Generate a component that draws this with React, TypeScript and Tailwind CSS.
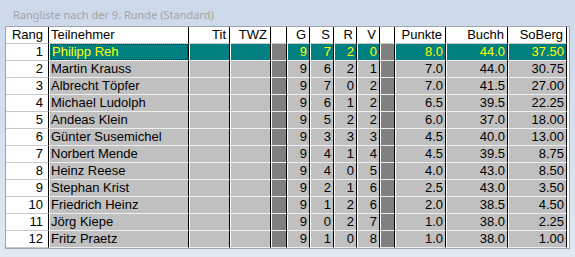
import React from "react";

type Col = { w: number; label: string; align: "left" | "right"; dark?: boolean; fixed?: boolean };

const cols: Col[] = [
  { w: 43, label: "Rang", align: "right", fixed: true },
  { w: 140, label: "Teilnehmer", align: "left" },
  { w: 41, label: "Tit", align: "right" },
  { w: 41, label: "TWZ", align: "right" },
  { w: 16, label: "", align: "right", dark: true },
  { w: 23, label: "G", align: "right" },
  { w: 24, label: "S", align: "right" },
  { w: 23, label: "R", align: "right" },
  { w: 23, label: "V", align: "right" },
  { w: 15, label: "", align: "right", dark: true },
  { w: 51, label: "Punkte", align: "right" },
  { w: 62, label: "Buchh", align: "right" },
  { w: 59, label: "SoBerg", align: "right" },
];

const rows: string[][] = [
  ["1", "Philipp Reh", "", "", "", "9", "7", "2", "0", "", "8.0", "44.0", "37.50"],
  ["2", "Martin Krauss", "", "", "", "9", "6", "2", "1", "", "7.0", "44.0", "30.75"],
  ["3", "Albrecht Töpfer", "", "", "", "9", "7", "0", "2", "", "7.0", "41.5", "27.00"],
  ["4", "Michael Ludolph", "", "", "", "9", "6", "1", "2", "", "6.5", "39.5", "22.25"],
  ["5", "Andeas Klein", "", "", "", "9", "5", "2", "2", "", "6.0", "37.0", "18.00"],
  ["6", "Günter Susemichel", "", "", "", "9", "3", "3", "3", "", "4.5", "40.0", "13.00"],
  ["7", "Norbert Mende", "", "", "", "9", "4", "1", "4", "", "4.5", "39.5", "8.75"],
  ["8", "Heinz Reese", "", "", "", "9", "4", "0", "5", "", "4.0", "43.0", "8.50"],
  ["9", "Stephan Krist", "", "", "", "9", "2", "1", "6", "", "2.5", "43.0", "3.50"],
  ["10", "Friedrich Heinz", "", "", "", "9", "1", "2", "6", "", "2.0", "38.5", "4.50"],
  ["11", "Jörg Kiepe", "", "", "", "9", "0", "2", "7", "", "1.0", "38.0", "2.25"],
  ["12", "Fritz Praetz", "", "", "", "9", "1", "0", "8", "", "1.0", "38.0", "1.00"],
];

function HeaderRow() {
  return (
    <div className="flex h-[17px]">
      {cols.map((c, i) => (
        <div
          key={i}
          style={{ width: c.w }}
          className={
            "h-[17px] shrink-0 bg-white border-r border-r-black border-b border-b-[#c8c8c8] leading-[16px] " +
            (c.align === "left" ? "pl-[2px] text-left" : i === 0 ? "pr-[5px] text-right" : "pr-[3px] text-right")
          }
        >
          {c.label}
        </div>
      ))}
    </div>
  );
}

function DataRow({ r, sel }: { r: string[]; sel: boolean }) {
  return (
    <div className="flex h-[17px]">
      {cols.map((c, i) => {
        let cls = "h-[17px] shrink-0 border-r border-r-black leading-[16px] whitespace-nowrap overflow-hidden ";
        if (c.fixed) {
          cls += "bg-white text-black border-b border-b-[#c8c8c8] pr-[5px] text-right";
        } else if (c.dark) {
          cls += "bg-[#808080] border-l border-l-white border-b border-b-[#eeeeee]";
        } else {
          cls +=
            (sel ? "bg-[#008080] text-[#ffff00] " : "bg-[#c0c0c0] text-black ") +
            "border-l border-l-white border-b border-b-[#eeeeee] " +
            (c.align === "left" ? "pl-[1px] text-left" : "pr-[2px] text-right");
        }
        return (
          <div key={i} style={{ width: c.w }} className={cls}>
            {sel && i === 1 ? (
              <div className="h-full border border-dotted border-[#202020] leading-[14px] pl-0">{r[i]}</div>
            ) : (
              r[i]
            )}
          </div>
        );
      })}
    </div>
  );
}

export default function App() {
  return (
    <div
      className="w-[575px] h-[257px] overflow-hidden bg-gradient-to-b from-[#cbd9ea] to-[#dfe8f3] pl-[5px] pt-[6px]"
      style={{ fontFamily: "'Liberation Sans', Arial, sans-serif" }}
    >
      <div
        className="h-[20px] pl-[8px] text-[11px] leading-[17px] text-[#a3a3a3]"
        style={{ fontFamily: "'Noto Sans', 'Open Sans', sans-serif" }}
      >
        Rangliste nach der 9. Runde (Standard)
      </div>
      <div className="w-[565px] h-[223px] border border-[#a0a4aa] bg-white text-[13px] text-black">
        <HeaderRow />
        {rows.map((r, i) => (
          <DataRow key={i} r={r} sel={i === 0} />
        ))}
      </div>
    </div>
  );
}
